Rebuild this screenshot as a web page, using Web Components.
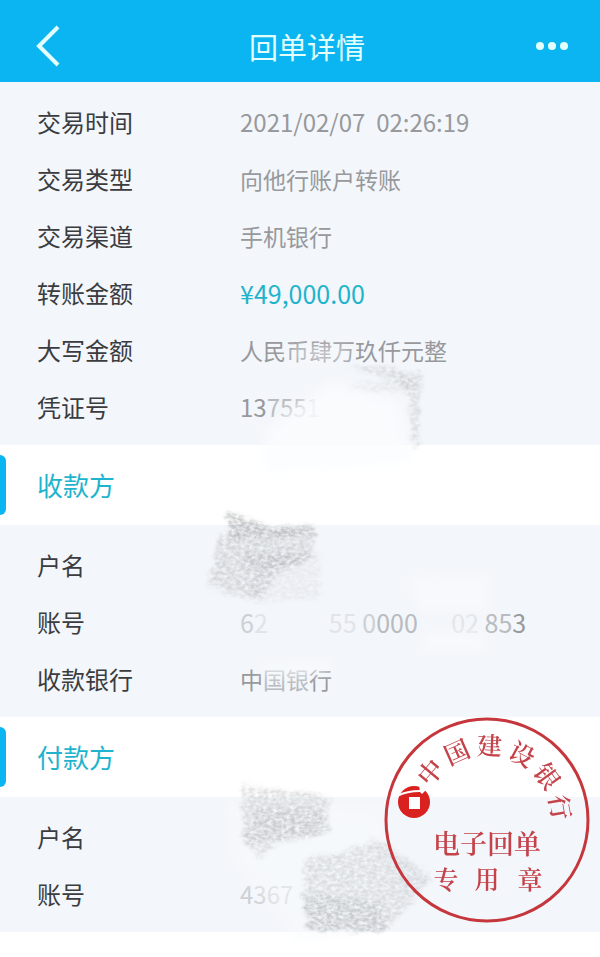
<!DOCTYPE html>
<html lang="zh-CN">
<head>
<meta charset="utf-8">
<meta name="viewport" content="width=device-width, initial-scale=1">
<title>回单详情</title>
<style>
  body {
    margin: 0;
    background: #fff;
    color: #3a3c40;
    font-family: "Noto Sans CJK SC", sans-serif;
    --brand: #0ab5f1;
    --accent: #1fb4cd;
    --muted: #97999d;
    --panel: #f3f6fa;
  }
</style>
</head>
<body>
<receipt-page>
  <receipt-header slot="header" heading="回单详情"></receipt-header>
  <receipt-section>
    <receipt-row label="交易时间" kind="number">2021/02/07&nbsp; 02:26:19</receipt-row>
    <receipt-row label="交易类型">向他行账户转账</receipt-row>
    <receipt-row label="交易渠道">手机银行</receipt-row>
    <receipt-row label="转账金额" kind="amount">¥49,000.00</receipt-row>
    <receipt-row label="大写金额">人民币肆万玖仟元整</receipt-row>
    <receipt-row label="凭证号" kind="number">13<faint-text>755</faint-text><faint-text level="2">1</faint-text></receipt-row>
  </receipt-section>
  <receipt-section heading="收款方">
    <receipt-row label="户名"></receipt-row>
    <receipt-row label="账号" kind="account"><faint-text level="2">6</faint-text><faint-text level="3">2&#8199;&#8199; &#8199;&#8199;55</faint-text> <faint-text level="2">0</faint-text><faint-text>000</faint-text> <faint-text level="3">&#8199;&#8199;02</faint-text> <faint-text>85</faint-text>3</receipt-row>
    <receipt-row label="收款银行">中<faint-text>国银</faint-text>行</receipt-row>
  </receipt-section>
  <receipt-section heading="付款方">
    <receipt-row label="户名"></receipt-row>
    <receipt-row label="账号" kind="number"><faint-text level="2">4367</faint-text></receipt-row>
  </receipt-section>
  <redaction-smudges slot="overlay"></redaction-smudges>
  <bank-seal slot="overlay"></bank-seal>
</receipt-page>

<script>
  class BaseElement extends HTMLElement {
    mount(html) {
      this.attachShadow({ mode: "open" }).innerHTML = html.trim();
    }
  }

  customElements.define("receipt-page", class extends BaseElement {
    constructor() {
      super();
      this.mount(`
        <style>
          :host { display: block; position: relative; min-height: 100vh; overflow: hidden; }
        </style>
        <slot name="header"></slot>
        <main><slot></slot></main>
        <slot name="overlay"></slot>`);
    }
  });

  customElements.define("receipt-header", class extends BaseElement {
    connectedCallback() {
      this.mount(`
        <style>
          :host { display: block; background: var(--brand); color: #e2fffd; }
          header {
            display: grid; grid-template-columns: 74px 1fr 60px; align-items: center;
            padding: 10px 14px 0; height: 72px;
          }
          h1 { margin: 0; text-align: center; font-size: 29px; font-weight: 400; line-height: 40px; }
          button { border: 0; padding: 0; background: none; color: inherit; height: 60px; display: flex; align-items: center; }
          .back { padding-left: 22px; }
          .more { justify-content: flex-end; padding-right: 16px; }
          svg { display: block; }
        </style>
        <header>
          <button type="button" class="back" aria-label="返回">
            <svg width="26" height="42" viewBox="0 0 26 42" fill="none" stroke="currentColor" stroke-width="4"><path d="M22 2 3 21 22 40"/></svg>
          </button>
          <h1></h1>
          <button type="button" class="more" aria-label="更多">
            <svg width="34" height="10" viewBox="0 0 34 10" fill="currentColor"><circle cx="4" cy="5" r="4"/><circle cx="16" cy="5" r="4"/><circle cx="28" cy="5" r="4"/></svg>
          </button>
        </header>`);
      this.shadowRoot.querySelector("h1").textContent = this.getAttribute("heading");
    }
  });

  customElements.define("receipt-section", class extends BaseElement {
    connectedCallback() {
      const heading = this.getAttribute("heading");
      this.mount(`
        <style>
          :host { display: block; }
          .band { display: flex; align-items: center; gap: 31px; height: 80px; background: #fff; }
          .band i { width: 6px; height: 60px; border-radius: 0 6px 6px 0; background: var(--brand); }
          h2 { margin: 0; font-size: 26px; line-height: 40px; font-weight: 400; color: var(--accent); }
          dl { margin: 0; padding: 11px 0 10px; background: var(--panel); }
        </style>
        ${heading ? `<div class="band"><i></i><h2>${heading}</h2></div>` : ""}
        <dl><slot></slot></dl>`);
    }
  });

  customElements.define("receipt-row", class extends BaseElement {
    connectedCallback() {
      this.mount(`
        <style>
          :host { display: grid; grid-template-columns: 203px 1fr; align-items: center; padding: 0 37px; height: 57px; white-space: nowrap; }
          dt { font-size: 24px; line-height: 36px; }
          dd { margin: 0; font-size: 23px; line-height: 36px; color: var(--muted); }
          :host([kind="number"]) dd { font-size: 24px; }
          :host([kind="account"]) dd { font-size: 25px; }
          :host([kind="amount"]) dd { font-size: 25px; color: var(--accent); }
        </style>
        <dt>${this.getAttribute("label")}</dt>
        <dd><slot></slot></dd>`);
    }
  });

  customElements.define("faint-text", class extends BaseElement {
    constructor() {
      super();
      this.mount(`<style>
          :host { color: #b8bbbf; }
          :host([level="2"]) { color: #cdd0d4; }
          :host([level="3"]) { color: #e1e4e8; }
        </style><slot></slot>`);
    }
  });

  /* Pale washes and grainy pencil-like strokes laid over private data. */
  customElements.define("redaction-smudges", class extends BaseElement {
    constructor() {
      super();
      this.mount(`
        <style>
          :host { position: absolute; top: 0; left: 0; pointer-events: none; }
          svg { display: block; }
        </style>
        <svg width="600" height="957" viewBox="0 0 600 957" aria-hidden="true">
          <defs>
            <filter id="soft" x="-20%" y="-20%" width="140%" height="140%"><feGaussianBlur stdDeviation="6"/></filter>
            <filter id="grain" x="-10%" y="-10%" width="120%" height="120%" color-interpolation-filters="sRGB">
              <feGaussianBlur in="SourceGraphic" stdDeviation="2" result="b"/>
              <feTurbulence type="fractalNoise" baseFrequency="0.06 0.12" numOctaves="2" seed="4" result="w"/>
              <feDisplacementMap in="b" in2="w" scale="10" xChannelSelector="R" yChannelSelector="G" result="d"/>
              <feTurbulence type="fractalNoise" baseFrequency="0.22 0.32" numOctaves="3" seed="11" result="n"/>
              <feColorMatrix in="n" type="matrix" values="0 0 0 0 0  0 0 0 0 0  0 0 0 0 0  0 0 0 1.8 -0.3" result="m"/>
              <feComposite in="d" in2="m" operator="in" result="c"/>
              <feGaussianBlur in="c" stdDeviation="0.7"/>
            </filter>
          </defs>
          <g filter="url(#soft)" fill="#fafcfe">
            <path d="M264 430 330 380 400 400 414 462 264 472Z" opacity=".8"/>
            <path d="M290 346 350 346 350 362 290 362Z" opacity=".5"/>
            <path d="M405 578 490 574 486 612 420 612Z" opacity=".6"/>
            <path d="M422 632 486 632 486 652 422 652Z" opacity=".6"/>
            <path d="M225 800 385 806 400 920 300 944 232 860Z" opacity=".5"/>
            <path d="M262 664 330 660 330 674 262 676Z" opacity=".7"/>
          </g>
          <g filter="url(#grain)" fill="#9c9ea2">
            <path d="M348 366 380 366 422 374 418 446 412 448 410 400 398 382Z" opacity=".3"/>
            <path d="M350 386 412 376 412 392 352 390Z" opacity=".15"/>
            <path d="M226 512 232 512 268 526 315 527 315 538 230 538Z" opacity=".6"/>
            <path d="M219 536 314 540 312 560 280 572 258 600 208 586Z" opacity=".36"/>
            <path d="M258 562 320 552 320 598 250 602Z" opacity=".13"/>
            <path d="M240 552 308 554 306 562 250 570Z" opacity=".25"/>
            <path d="M243 784 332 796 326 812 330 834 274 844 260 860 242 838Z" opacity=".32"/>
            <path d="M256 808 322 810 326 834 244 842Z" opacity=".26"/>
            <path d="M306 858 362 848 374 838 412 862 432 880 384 932 308 930 302 900Z" opacity=".3"/>
            <path d="M304 896 380 900 388 930 306 930Z" opacity=".3"/>
          </g>
        </svg>`);
    }
  });

  customElements.define("bank-seal", class extends BaseElement {
    constructor() {
      super();
      const arc = [..."中国建设银行"].map((c, i) =>
        `<text y="-65" transform="rotate(${-50 + i * 26})">${c}</text>`).join("");
      this.mount(`
        <style>
          :host { position: absolute; top: 716px; right: 9px; }
          svg { display: block; }
          text { font-family: "Noto Serif CJK SC", "Noto Sans CJK SC", serif; fill: #c4434a; text-anchor: middle; font-size: 25px; font-weight: 600; }
          .main { font-size: 27px; }
        </style>
        <svg width="208" height="208" viewBox="-104 -104 208 208" role="img" aria-label="中国建设银行电子回单专用章">
          <circle r="101" fill="none" stroke="#c5373c" stroke-width="3"/>
          ${arc}
          <text class="main" y="34">电子回单</text>
          <text x="-41" y="69">专</text><text x="0" y="69">用</text><text x="43" y="69">章</text>
          <g transform="translate(-73 -18)">
            <circle r="16" fill="#d9221f"/>
            <path fill="#fbfcfe" d="M-5-5H6V7H-5ZM5-17H14L12-12 8-8 6-10Z"/>
            <path fill="none" stroke="#fbfcfe" stroke-width="2" d="M-17-6Q-7-11 6-11"/>
          </g>
        </svg>`);
    }
  });
</script>
</body>
</html>
